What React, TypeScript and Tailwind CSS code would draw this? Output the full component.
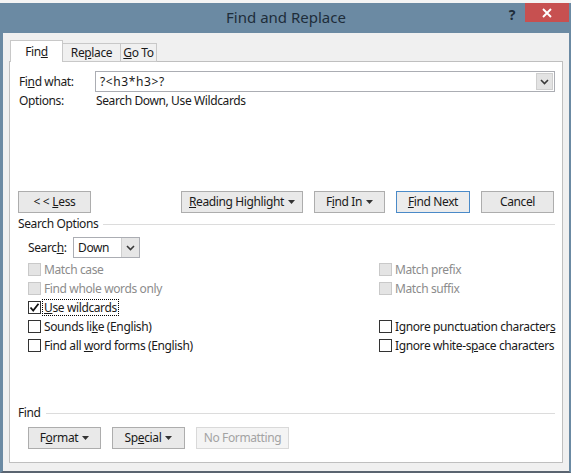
import React from 'react';

const Caret: React.FC = () => (
  <svg width="7" height="4" viewBox="0 0 7 4" className="ml-[4px] inline-block">
    <path d="M0 0 H7 L3.5 4 Z" fill="#333" />
  </svg>
);

const Chevron: React.FC = () => (
  <svg width="9" height="6" viewBox="0 0 9 6">
    <path d="M1 1 L4.5 4.5 L8 1" stroke="#3a3a3a" strokeWidth="1.6" fill="none" />
  </svg>
);

interface BtnProps {
  w: string;
  children: React.ReactNode;
  primary?: boolean;
  disabled?: boolean;
}

const Btn: React.FC<BtnProps> = ({ w, children, primary, disabled }) => {
  let cls = 'border-[#adadad] bg-[#e9e9e9] text-[#1a1a1a]';
  if (primary) cls = 'border-[#4a8ac8] bg-[#ececec] text-[#1a1a1a]';
  if (disabled) cls = 'border-[#d9d9d9] bg-[#f4f4f4] text-[#a3a3a3]';
  return (
    <div className={`${w} h-[22px] border flex items-center justify-center whitespace-nowrap ${cls}`}>
      {children}
    </div>
  );
};

interface CheckProps {
  label: React.ReactNode;
  checked?: boolean;
  disabled?: boolean;
  focus?: boolean;
}

const Check: React.FC<CheckProps> = ({ label, checked, disabled, focus }) => (
  <div className="h-[19px] flex items-center whitespace-nowrap">
    <div
      className={`w-[13px] h-[13px] shrink-0 border flex items-center justify-center ${
        disabled ? 'border-[#c9c9c9] bg-[#e4e4e4]' : 'border-[#333333] bg-white'
      }`}
    >
      {checked && (
        <svg width="11" height="11" viewBox="0 0 11 11">
          <path d="M1.5 5.5 L4.2 8.5 L9.5 1.8" stroke="#111" strokeWidth="1.8" fill="none" />
        </svg>
      )}
    </div>
    <span
      className={`ml-[1px] px-[1px] leading-[15px] ${
        disabled ? 'text-[#8c8c8c]' : 'text-[#1a1a1a]'
      } ${focus ? 'border border-dotted border-black' : 'border border-transparent'}`}
    >
      {label}
    </span>
  </div>
);

const Section: React.FC<{ title: string }> = ({ title }) => (
  <div className="h-[16px] flex items-center pl-[8px] pr-[7px]">
    <span className="text-[#1a1a1a] leading-[16px]">{title}</span>
    <div className="flex-1 h-px bg-[#dcdcdc] ml-[5px]" />
  </div>
);

export default function App() {
  return (
    <div
      className="w-[571px] h-[476px] overflow-hidden bg-white flex flex-col text-[12px] tracking-[-0.38px]"
      style={{ fontFamily: '"Noto Sans", "Open Sans", sans-serif' }}
    >
      <div className="h-[3px] bg-[#f4f4f4]" />
      <div className="h-[470px] flex flex-col border-l-[3px] border-r-[2px] border-b-[2px] border-l-[#6b8aa3] border-r-[#6b8aa3] border-b-[#5a6470]">
        {/* title bar */}
        <div className="h-[30px] bg-[#6b8aa3] relative flex items-center justify-center">
          <span className="text-[15px] tracking-normal text-[#1e2d3a] -mt-[2px]">Find and Replace</span>
          <div className="absolute right-0 top-0 flex items-start">
            <span className="text-[14px] font-bold text-[#1e2d3a] mr-[10px] mt-[1px]">?</span>
            <div className="w-[44px] h-[19px] bg-[#c75050] flex items-center justify-center">
              <svg width="10" height="10" viewBox="0 0 10 10">
                <path d="M1 1 L9 9 M9 1 L1 9" stroke="#fff" strokeWidth="1.9" />
              </svg>
            </div>
          </div>
        </div>

        {/* body */}
        <div className="flex-1 bg-[#f0f0f0] flex flex-col pt-[7px] pl-[6px] pr-[6px] pb-[8px]">
          {/* tabs */}
          <div className="flex items-end h-[22px] pl-[1px] relative z-10 -mb-px">
            <div className="w-[53px] h-[22px] bg-white border border-b-0 border-[#c8c8c8] flex items-center justify-center text-[#1a1a1a]">
              <span>
                Fin<u>d</u>
              </span>
            </div>
            <div className="w-[58px] h-[19px] bg-[#f0f0f0] border border-l-0 border-[#c8c8c8] flex items-center justify-center text-[#1a1a1a]">
              <span>
                Re<u>p</u>lace
              </span>
            </div>
            <div className="w-[36px] h-[19px] bg-[#f0f0f0] border border-l-0 border-[#c8c8c8] flex items-center justify-center text-[#1a1a1a] whitespace-nowrap">
              <span>
                <u>G</u>o To
              </span>
            </div>
          </div>

          {/* panel */}
          <div className="flex-1 bg-white border border-[#bfbfbf] flex flex-col text-[#1a1a1a]">
            <div className="mt-[9px] flex items-center pl-[9px] pr-[7px]">
              <span className="w-[76px]">
                Fi<u>n</u>d what:
              </span>
              <div className="flex-1 h-[21px] border border-[#abadb3] flex items-center pl-[4px] pr-[1px]">
                <span className="flex-1 tracking-[0.6px]">?&lt;h3*h3&gt;?</span>
                <div className="w-[17px] h-[17px] bg-[#e3e3e3] border border-[#cfcfcf] flex items-center justify-center">
                  <Chevron />
                </div>
              </div>
            </div>
            <div className="mt-[1px] h-[16px] flex items-center pl-[9px]">
              <span className="w-[77px]">Options:</span>
              <span>Search Down, Use Wildcards</span>
            </div>

            <div className="mt-[82px] flex justify-between px-[8px]">
              <Btn w="w-[73px]">
                &lt; &lt; <u className="ml-[3px]">L</u>ess
              </Btn>
              <div className="flex gap-[11px]">
                <Btn w="w-[122px]">
                  <u>R</u>eading Highlight
                  <Caret />
                </Btn>
                <Btn w="w-[71px]">
                  F<u>i</u>nd In
                  <Caret />
                </Btn>
                <Btn w="w-[74px]" primary>
                  <u>F</u>ind Next
                </Btn>
                <Btn w="w-[73px]">Cancel</Btn>
              </div>
            </div>

            <div className="mt-[3px]">
              <Section title="Search Options" />
            </div>

            <div className="mt-[5px] flex items-center pl-[18px]">
              <span className="w-[45px]">
                Searc<u>h</u>:
              </span>
              <div className="w-[67px] h-[21px] border border-[#abadb3] flex">
                <span className="flex-1 pl-[4px] leading-[19px]">Down</span>
                <div className="w-[18px] border-l border-[#cfcfcf] bg-[#e6e6e6] flex items-center justify-center">
                  <Chevron />
                </div>
              </div>
            </div>

            <div className="mt-[2px] grid grid-cols-[351px_1fr] pl-[18px]">
              <div className="flex flex-col">
                <Check label="Match case" disabled />
                <Check label="Find whole words only" disabled />
                <Check
                  label={
                    <>
                      <u>U</u>se wildcards
                    </>
                  }
                  checked
                  focus
                />
                <Check
                  label={
                    <>
                      Sounds li<u>k</u>e (English)
                    </>
                  }
                />
                <Check
                  label={
                    <>
                      Find all <u>w</u>ord forms (English)
                    </>
                  }
                />
              </div>
              <div className="flex flex-col">
                <Check label="Match prefix" disabled />
                <Check label="Match suffix" disabled />
                <div className="h-[19px]" />
                <Check
                  label={
                    <>
                      Ignore punctuation character<u>s</u>
                    </>
                  }
                />
                <Check
                  label={
                    <>
                      Ignore white-s<u>p</u>ace characters
                    </>
                  }
                />
              </div>
            </div>

            <div className="mt-[50px]">
              <Section title="Find" />
            </div>

            <div className="mt-[6px] flex gap-[11px] pl-[18px]">
              <Btn w="w-[73px]">
                F<u>o</u>rmat
                <Caret />
              </Btn>
              <Btn w="w-[73px]">
                Sp<u>e</u>cial
                <Caret />
              </Btn>
              <Btn w="w-[93px]" disabled>
                No Formatting
              </Btn>
            </div>
          </div>
        </div>
      </div>
    </div>
  );
}
